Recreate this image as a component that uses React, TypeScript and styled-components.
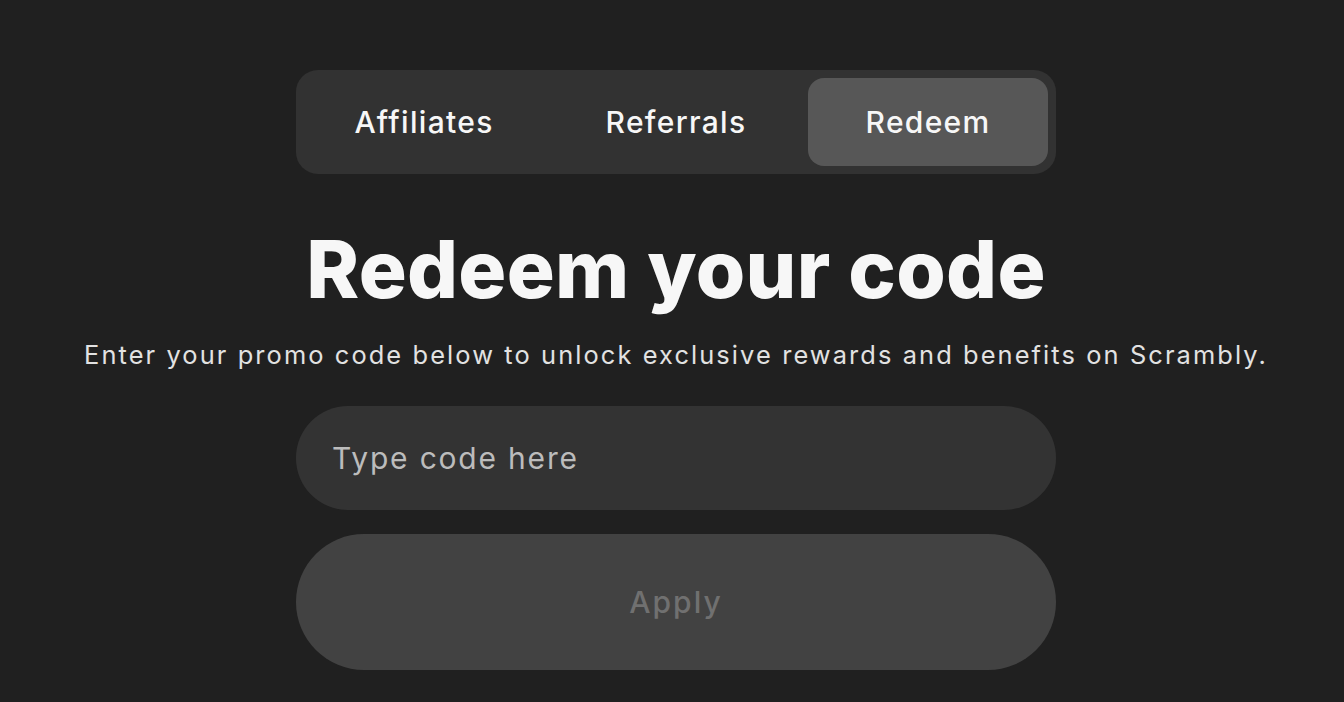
import React, { useState } from "react";
import styled, { createGlobalStyle } from "styled-components";

const GlobalStyle = createGlobalStyle`
  html, body {
    margin: 0;
    padding: 0;
    background: #202020;
    font-family: "Inter", "Open Sans", sans-serif;
    color: #f5f5f5;
  }
`;

const Page = styled.main`
  min-height: 702px;
  display: flex;
  flex-direction: column;
  align-items: center;
  padding: 70px 0 0 8px;
  box-sizing: border-box;
`;

const TabBar = styled.nav`
  width: 760px;
  box-sizing: border-box;
  padding: 8px;
  display: flex;
  gap: 12px;
  background: #323232;
  border-radius: 22px;
`;

const Tab = styled.button<{ $active?: boolean }>`
  flex: 1;
  height: 88px;
  border: none;
  border-radius: 16px;
  background: ${({ $active }) => ($active ? "#575757" : "transparent")};
  color: #f7f7f7;
  font-family: inherit;
  font-size: 30px;
  font-weight: 500;
  letter-spacing: 1.3px;
  cursor: pointer;
`;

const Title = styled.h1`
  margin: 51px 0 0;
  font-size: 80px;
  font-weight: 800;
  letter-spacing: 0.3px;
  line-height: 88px;
  color: #f7f7f7;
`;

const Subtitle = styled.p`
  margin: 26px 0 0;
  font-size: 25.4px;
  line-height: 32px;
  letter-spacing: 2.1px;
  color: #e2e2e2;
`;

const Form = styled.form`
  width: 760px;
  margin-top: 35px;
  display: flex;
  flex-direction: column;
  gap: 24px;
`;

const CodeInput = styled.input`
  height: 104px;
  box-sizing: border-box;
  padding: 0 36px;
  border: none;
  border-radius: 52px;
  background: #333333;
  color: #f5f5f5;
  font-family: inherit;
  font-size: 30px;
  letter-spacing: 1.8px;
  outline: none;

  &::placeholder {
    color: #bcbcbc;
  }
`;

const ApplyButton = styled.button`
  height: 136px;
  border: none;
  border-radius: 68px;
  background: #424242;
  color: #707070;
  font-family: inherit;
  font-size: 30px;
  font-weight: 500;
  letter-spacing: 2px;
`;

const tabs = ["Affiliates", "Referrals", "Redeem"];

export default function App() {
  const [active, setActive] = useState("Redeem");
  const [code, setCode] = useState("");

  return (
    <>
      <GlobalStyle />
      <Page>
        <TabBar>
          {tabs.map((t) => (
            <Tab key={t} $active={t === active} onClick={() => setActive(t)}>
              {t}
            </Tab>
          ))}
        </TabBar>
        <Title>Redeem your code</Title>
        <Subtitle>
          Enter your promo code below to unlock exclusive rewards and benefits
          on Scrambly.
        </Subtitle>
        <Form onSubmit={(e) => e.preventDefault()}>
          <CodeInput
            placeholder="Type code here"
            value={code}
            onChange={(e) => setCode(e.target.value)}
          />
          <ApplyButton type="submit" disabled={!code}>
            Apply
          </ApplyButton>
        </Form>
      </Page>
    </>
  );
}
